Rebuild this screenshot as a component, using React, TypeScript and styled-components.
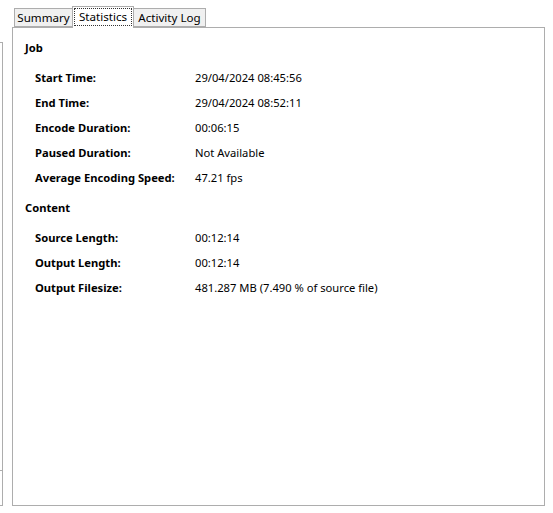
import React from "react";
import styled, { createGlobalStyle } from "styled-components";

const Global = createGlobalStyle`
  html, body { margin: 0; padding: 0; background: #ffffff; }
  body { font-family: "Noto Sans", "Open Sans", sans-serif; font-size: 11.2px; color: #000; }
`;

const Page = styled.div`
  display: flex;
  width: 553px;
  height: 513px;
  box-sizing: border-box;
  background: #fff;
`;

const LeftStrip = styled.div`
  display: flex;
  flex-direction: column;
  margin-top: 42px;
  width: 3px;
`;

const StripBox = styled.div<{ $h: number; $bottom?: boolean }>`
  box-sizing: border-box;
  height: ${(p) => p.$h}px;
  border-top: 1px solid #adadad;
  border-right: 1px solid #adadad;
  border-bottom: ${(p) => (p.$bottom ? "1px solid #adadad" : "none")};
`;

const TabControl = styled.div`
  display: flex;
  flex-direction: column;
  margin-left: 9px;
  margin-top: 6px;
  width: 533px;
`;

const TabStrip = styled.div`
  display: flex;
  align-items: flex-end;
  height: 21px;
  padding-left: 2px;
  position: relative;
  z-index: 1;
`;

const Tab = styled.div<{ $active?: boolean; $w: number }>`
  box-sizing: border-box;
  width: ${(p) => p.$w}px;
  height: ${(p) => (p.$active ? 22 : 19)}px;
  margin-bottom: ${(p) => (p.$active ? -1 : 0)}px;
  margin-left: ${(p) => (p.$active ? 2 : 0)}px;
  border: 1px solid #adadad;
  border-bottom: ${(p) => (p.$active ? "none" : "1px solid #adadad")};
  background: ${(p) => (p.$active ? "#ffffff" : "#f0f0f0")};
  display: flex;
  align-items: center;
  justify-content: center;
  padding: ${(p) => (p.$active ? "1px 1px 2px" : "0")};
  font-size: 11.6px;
  line-height: 16px;
  white-space: nowrap;
  & + & { margin-left: ${(p) => (p.$active ? 2 : -1)}px; }
`;

const FocusRect = styled.span`
  box-sizing: border-box;
  flex: 1;
  align-self: stretch;
  display: flex;
  align-items: center;
  justify-content: center;
  border: 1px dotted #333;
`;

const Panel = styled.div`
  box-sizing: border-box;
  height: 479px;
  border: 1px solid #adadad;
  background: #fff;
  padding: 12px 12px 0 12px;
`;

const Section = styled.section`
  display: flex;
  flex-direction: column;
  & + & { margin-top: 14px; }
`;

const SectionTitle = styled.div`
  font-weight: 700;
  line-height: 16px;
`;

const Rows = styled.div`
  display: grid;
  grid-template-columns: 160px 1fr;
  row-gap: 9px;
  margin-top: 14px;
  padding-left: 10px;
`;

const Label = styled.div`
  font-weight: 700;
  line-height: 16px;
  white-space: nowrap;
`;

const Value = styled.div`
  line-height: 16px;
  white-space: nowrap;
`;

const sections = [
  {
    title: "Job",
    rows: [
      ["Start Time:", "29/04/2024 08:45:56"],
      ["End Time:", "29/04/2024 08:52:11"],
      ["Encode Duration:", "00:06:15"],
      ["Paused Duration:", "Not Available"],
      ["Average Encoding Speed:", "47.21 fps"],
    ],
  },
  {
    title: "Content",
    rows: [
      ["Source Length:", "00:12:14"],
      ["Output Length:", "00:12:14"],
      ["Output Filesize:", "481.287 MB (7.490 % of source file)"],
    ],
  },
];

export default function App() {
  return (
    <>
      <Global />
      <Page>
        <LeftStrip>
          <StripBox $h={428} />
          <StripBox $h={36} $bottom />
        </LeftStrip>
        <TabControl>
          <TabStrip>
            <Tab $w={59}>Summary</Tab>
            <Tab $w={62} $active>
              <FocusRect>Statistics</FocusRect>
            </Tab>
            <Tab $w={73}>Activity Log</Tab>
          </TabStrip>
          <Panel>
            {sections.map((s) => (
              <Section key={s.title}>
                <SectionTitle>{s.title}</SectionTitle>
                <Rows>
                  {s.rows.map(([l, v]) => (
                    <React.Fragment key={l}>
                      <Label>{l}</Label>
                      <Value>{v}</Value>
                    </React.Fragment>
                  ))}
                </Rows>
              </Section>
            ))}
          </Panel>
        </TabControl>
      </Page>
    </>
  );
}
